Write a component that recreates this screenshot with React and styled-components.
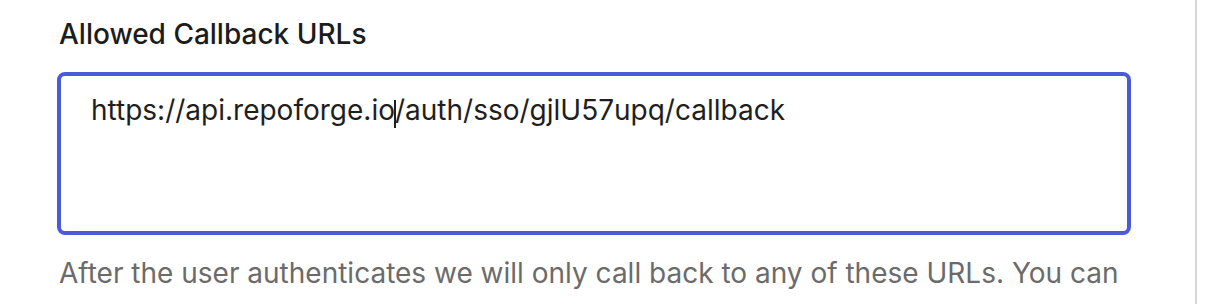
import React from "react";
import styled, { createGlobalStyle } from "styled-components";

const GlobalStyle = createGlobalStyle`
  html, body {
    margin: 0;
    padding: 0;
    background: #ffffff;
    font-family: Inter, "Noto Sans", sans-serif;
    overflow: hidden;
  }
`;

const Page = styled.div`
  display: flex;
  height: 304px;
  overflow: hidden;
`;

const Panel = styled.div`
  width: 1197px;
  box-sizing: border-box;
  border-right: 2px solid #d6d6d6;
  padding: 17px 64px 0 57px;
`;

const Label = styled.div`
  font-size: 28px;
  font-weight: 500;
  line-height: 34px;
  color: #1c1c1c;
  padding-left: 2px;
  margin-bottom: 21px;
`;

const Field = styled.div`
  height: 163px;
  box-sizing: border-box;
  border: 4px solid #4a5ada;
  border-radius: 8px;
  padding: 16px 30px;
  font-size: 28px;
  line-height: 36px;
  color: #1e1e1e;
`;

const Caret = styled.span`
  display: inline-block;
  width: 2px;
  height: 28px;
  margin: 0 -1px;
  background: #1e1e1e;
  vertical-align: -8px;
`;

const Hint = styled.p`
  margin: 15px 0 0 2px;
  font-size: 28px;
  line-height: 46px;
  color: #6b6b6b;
`;

export default function App() {
  return (
    <>
      <GlobalStyle />
      <Page>
        <Panel>
          <Label>Allowed Callback URLs</Label>
          <Field>
            https://api.repoforge.io<Caret />/auth/sso/gjlU57upq/callback
          </Field>
          <Hint>
            After the user authenticates we will only call back to any of these
            URLs. You can specify multiple valid URLs by comma-separating them.
          </Hint>
        </Panel>
      </Page>
    </>
  );
}
